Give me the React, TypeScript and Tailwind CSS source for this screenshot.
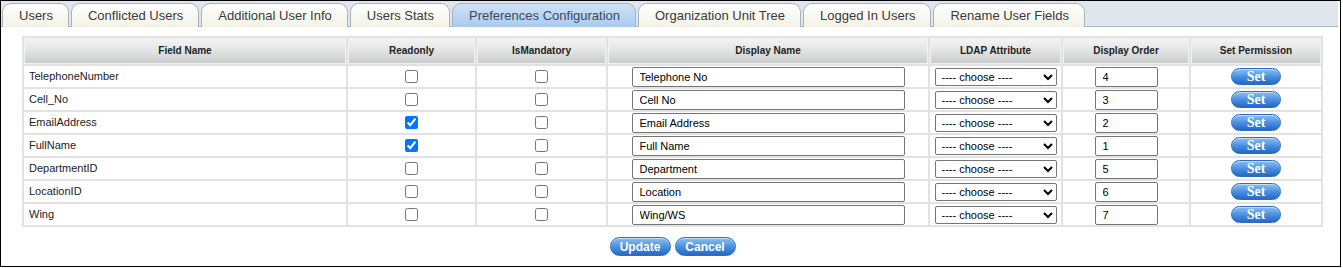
import React from "react";

const tabs = [
  "Users",
  "Conflicted Users",
  "Additional User Info",
  "Users Stats",
  "Preferences Configuration",
  "Organization Unit Tree",
  "Logged In Users",
  "Rename User Fields",
];

const rows: { field: string; readonly: boolean; mandatory: boolean; display: string; order: string }[] = [
  { field: "TelephoneNumber", readonly: false, mandatory: false, display: "Telephone No", order: "4" },
  { field: "Cell_No", readonly: false, mandatory: false, display: "Cell No", order: "3" },
  { field: "EmailAddress", readonly: true, mandatory: false, display: "Email Address", order: "2" },
  { field: "FullName", readonly: true, mandatory: false, display: "Full Name", order: "1" },
  { field: "DepartmentID", readonly: false, mandatory: false, display: "Department", order: "5" },
  { field: "LocationID", readonly: false, mandatory: false, display: "Location", order: "6" },
  { field: "Wing", readonly: false, mandatory: false, display: "Wing/WS", order: "7" },
];

const headers = [
  { label: "Field Name", w: "w-[322px]" },
  { label: "Readonly", w: "w-[127px]" },
  { label: "IsMandatory", w: "w-[129px]" },
  { label: "Display Name", w: "w-[320px]" },
  { label: "LDAP Attribute", w: "w-[131px]" },
  { label: "Display Order", w: "w-[126px]" },
  { label: "Set Permission", w: "w-[130px]" },
];

const blueBtn =
  "rounded-full border border-[#2b6cc4] bg-gradient-to-b from-[#8cc0f0] via-[#4b91e0] to-[#2368c8] text-white font-bold leading-none shadow-[inset_0_1px_0_rgba(255,255,255,0.5)]";

export default function App() {
  return (
    <div className="w-[1341px] h-[267px] border border-black bg-white font-['Liberation_Sans',Arial,sans-serif] text-[#222]">
      {/* tab strip */}
      <div className="h-[26px] bg-[#e0e6ed] border-b border-[#aab4bf] flex items-end pl-[1px] gap-[2px] mr-[2px]">
        {tabs.map((t) => {
          const active = t === "Preferences Configuration";
          return (
            <div
              key={t}
              className={
                "h-[24px] -mb-[1px] pl-4 pr-[15px] flex items-center rounded-t-[9px] border border-b-0 border-[#a9b2bc] text-[13px] " +
                (active
                  ? "bg-gradient-to-b from-[#cfe2f7] to-[#a9caf0] text-[#3a4a5a]"
                  : "bg-gradient-to-b from-white to-[#f2f2e6] text-[#3a3a3a]")
              }
            >
              {t}
            </div>
          );
        })}
      </div>

      <div className="pl-[21px] pr-[17px] pt-[9px]">
        <table className="w-[1301px] table-fixed border-separate border-spacing-[2px] bg-[#e2e2e2] text-[11px] leading-none">
          <thead>
            <tr>
              {headers.map((h) => (
                <th
                  key={h.label}
                  className={
                    h.w +
                    " h-[26px] p-0 text-center text-[10px] font-bold text-[#222] border border-[#f2f2f2] bg-gradient-to-b from-[#f3f4f4] via-[#e2e3e3] to-[#c9caca]"
                  }
                >
                  {h.label}
                </th>
              ))}
            </tr>
          </thead>
          <tbody>
            {rows.map((r) => (
              <tr key={r.field} className="h-[21px]">
                <td className="h-[21px] p-0 pl-[5px] bg-white">{r.field}</td>
                <td className="p-0 bg-white">
                  <div className="flex justify-center items-center">
                    <input type="checkbox" defaultChecked={r.readonly} className="block m-0 w-[13px] h-[13px]" />
                  </div>
                </td>
                <td className="p-0 bg-white">
                  <div className="flex justify-center items-center">
                    <input type="checkbox" defaultChecked={r.mandatory} className="block m-0 w-[13px] h-[13px]" />
                  </div>
                </td>
                <td className="p-0 bg-white">
                  <div className="flex justify-center">
                    <input
                      type="text"
                      defaultValue={r.display}
                      className="block w-[273px] h-[20px] border border-[#767676] rounded-[2px] pl-[7px] text-[11px] text-black bg-white"
                    />
                  </div>
                </td>
                <td className="p-0 bg-white">
                  <div className="flex justify-center">
                    <select className="block w-[122px] h-[18px] border border-[#767676] rounded-[2px] text-[11px] text-black bg-white pl-[2px]">
                      <option>---- choose ----</option>
                    </select>
                  </div>
                </td>
                <td className="p-0 bg-white">
                  <div className="flex justify-center">
                    <input
                      type="text"
                      defaultValue={r.order}
                      className="block w-[63px] h-[20px] border border-[#767676] rounded-[2px] pl-[7px] text-[11px] text-black bg-white"
                    />
                  </div>
                </td>
                <td className="p-0 bg-white">
                  <div className="flex justify-center">
                    <button className={blueBtn + " block w-[50px] h-[17px] text-[14px] font-['Liberation_Serif',serif]"}>Set</button>
                  </div>
                </td>
              </tr>
            ))}
          </tbody>
        </table>

        <div className="w-[1301px] flex justify-center gap-[4px] mt-[10px]">
          <button className={blueBtn + " w-[61px] h-[19px] text-[12px]"}>Update</button>
          <button className={blueBtn + " w-[61px] h-[19px] text-[12px]"}>Cancel</button>
        </div>
      </div>
    </div>
  );
}
